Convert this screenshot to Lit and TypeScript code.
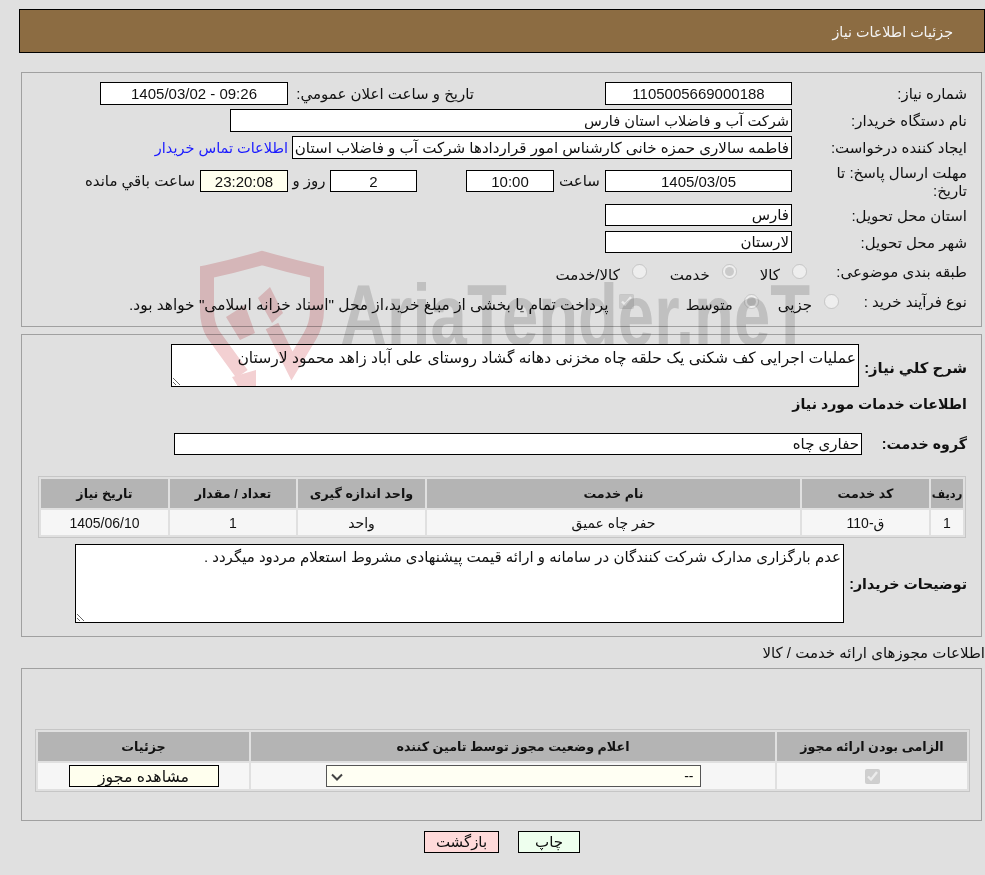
import { LitElement, html, css } from "lit";
import { customElement } from "lit/decorators.js";

const chevron =
  "url(\"data:image/svg+xml,%3Csvg xmlns='http://www.w3.org/2000/svg' width='12' height='8'%3E%3Cpath d='M1 1.5l5 5 5-5' fill='none' stroke='%23444' stroke-width='2'/%3E%3C/svg%3E\")";

@customElement("app-root")
export class AppRoot extends LitElement {
  static styles = css`
    :host {
      display: block;
      position: relative;
      width: 985px;
      height: 875px;
      overflow: hidden;
      background: #e0e0e0;
      color: #111;
      font: 15px "Liberation Sans", "DejaVu Sans", sans-serif;
      direction: rtl;
    }
    * { box-sizing: border-box; }
    .header {
      margin: 9px 0 0 19px;
      width: 966px;
      height: 44px;
      border: 1px solid #000;
      background: #8c6c42;
      color: #f4f4f4;
      font-size: 14.3px;
      display: flex;
      align-items: center;
      padding: 2px 31px 0 0;
    }
    .panel {
      margin-right: 3px;
      width: 961px;
      border: 1px solid #a0a0a0;
      padding-right: 14px;
    }
    .p1 { margin-top: 19px; height: 255px; padding-top: 9px; }
    .p2 { margin-top: 7px; height: 303px; padding-top: 9px; }
    .p3 { height: 153px; padding-top: 60px; }
    .row { display: flex; align-items: center; }
    .h23 { height: 23px; margin-bottom: 4px; }
    .h22 { height: 22px; margin-bottom: 5px; }
    .lab { flex: none; width: 175px; padding-top: 1px; }
    input.f {
      flex: none;
      height: 23px;
      border: 1px solid #000;
      border-radius: 0;
      background: #fff;
      color: #111;
      font: inherit;
      padding: 0 2px;
      outline: none;
      direction: rtl;
    }
    input.s { height: 22px; }
    input.fa { font-size: 14.6px; }
    input.long { font-size: 15.1px; }
    input.c { text-align: center; }
    .w187 { width: 187px; }
    .w88 { width: 88px; }
    .lab2 { flex: none; width: 186px; padding-top: 1px; }
    .sp1 { flex: none; width: 131px; }
    .link { color: #1a1aff; margin-right: 4px; white-space: nowrap; font-size: 14.5px; }
    .dead { margin-top: 7px; height: 30px; margin-bottom: 8px; }
    .dead .lab { padding-left: 30px; line-height: 18px; }
    .t51 { flex: none; width: 51px; text-align: center; }
    input.timer { background: #ffffee; }
    .m4 { margin-right: 5px; }
    .rad { height: 22px; }
    .r7 { margin-top: 11px; }
    .r8 { margin-top: 8px; }
    .r7 .lab-r { margin-bottom: 6px; }
    .r8 .lab-r2 { margin-bottom: 6px; }
    .lab-r { flex: none; width: 160px; }
    .lab-r2 { flex: none; width: 128px; }
    input.o {
      flex: none;
      width: 15px;
      height: 15px;
      margin: 0 0 8px 0;
    }
    .opt { margin: 0 12px 0 23px; white-space: nowrap; }
    .o2a { margin: 0 12px 0 19px; white-space: nowrap; }
    .o2b { margin: 0 11px 0 52px; white-space: nowrap; }
    .o2c { margin: 0 10px 0 0; white-space: nowrap; font-size: 15.4px; }
    textarea {
      flex: none;
      display: block;
      border: 1px solid #000;
      border-radius: 0;
      background: #fff;
      color: #111;
      font: inherit;
      padding: 3px 2px;
      margin: 0;
      outline: none;
      direction: rtl;
    }
    .ta1 { width: 688px; height: 43px; font-size: 15.55px; padding-top: 4px; }
    .ta2 { width: 769px; height: 79px; }
    .bold { font-weight: bold; font-size: 14.2px; white-space: nowrap; }
    .l108 { flex: none; width: 108px; padding-top: 3px; font-size: 14.8px; }
    .l105 { flex: none; width: 105px; }
    .l123 { flex: none; width: 123px; }
    .head2 { height: 20px; margin-top: 7px; display: flex; align-items: center; }
    .grp { margin-top: 19px; height: 22px; }
    .w688 { width: 688px; }
    table {
      border-collapse: separate;
      border-spacing: 2px;
      border: 1px solid #c6c6c6;
      table-layout: fixed;
    }
    th, td { padding: 0; text-align: center; font-size: 14px; }
    td { background: #f6f6f6; }
    th { background: #b4b4b4; font-weight: bold; font-size: 12.7px; height: 29px; }
    th.narrow { font-size: 11.5px; }
    .t1 { margin: 21px 1px 6px 0; width: 928px; }
    .t1 td { height: 25px; }
    .t2 { margin-right: -3px; width: 935px; }
    .t2 td { height: 26px; }
    .cap { height: 31px; display: flex; align-items: center; white-space: nowrap; padding-top: 1px; }
    select {
      display: block;
      margin: 0 auto;
      width: 375px;
      height: 22px;
      padding: 0 6px 0 20px;
      appearance: none;
      -webkit-appearance: none;
      background: #fffff3 ${css([chevron] as unknown as TemplateStringsArray)} no-repeat 4px 7px;
      border: 1px solid #555;
      border-radius: 0;
      font: 14px "Liberation Sans", sans-serif;
      color: #111;
      direction: rtl;
      outline: none;
    }
    .view {
      display: block;
      width: 150px;
      height: 22px;
      margin: 0 auto;
      border: 1px solid #000;
      background: #ffffee;
      color: #111;
      font: inherit;
      font-size: 15.8px;
      padding: 0;
    }
    td input[type="checkbox"] { width: 15px; height: 15px; margin: 0; vertical-align: middle; }
    .btns { display: flex; justify-content: center; margin-top: 10px; width: 985px; }
    .btns .inner { display: flex; gap: 19px; margin-left: 19px; }
    .btn {
      height: 22px;
      border: 1px solid #000;
      color: #111;
      font: inherit;
      padding: 0;
    }
    .print { width: 62px; background: #eeffee; }
    .back { width: 75px; background: #ffdada; }
    .wm {
      position: absolute;
      left: 0;
      top: 0;
      pointer-events: none;
      mix-blend-mode: multiply;
    }
    .wm text { direction: ltr; unicode-bidi: isolate; }
  `;

  render() {
    return html`
      <div class="header">جزئيات اطلاعات نياز</div>

      <div class="panel p1">
        <div class="row h23">
          <div class="lab">شماره نياز:</div>
          <input class="f c w187" readonly value="1105005669000188" />
          <div class="sp1"></div>
          <div class="lab2">تاريخ و ساعت اعلان عمومي:</div>
          <input class="f c" style="width:188px" readonly value="09:26 - 1405/03/02" />
        </div>
        <div class="row h23">
          <div class="lab">نام دستگاه خريدار:</div>
          <input class="f fa" style="width:562px" readonly value="شرکت آب و فاضلاب استان فارس" />
        </div>
        <div class="row h23">
          <div class="lab">ایجاد کننده درخواست:</div>
          <input class="f long" style="width:500px" readonly value="فاطمه سالاری حمزه خانی کارشناس امور قراردادها شرکت آب و فاضلاب استان فارس" />
          <a class="link">اطلاعات تماس خريدار</a>
        </div>
        <div class="row dead">
          <div class="lab">مهلت ارسال پاسخ: تا تاریخ:</div>
          <input class="f s c w187" readonly value="1405/03/05" />
          <div class="t51">ساعت</div>
          <input class="f s c w88" readonly value="10:00" />
          <div style="flex:none;width:49px"></div>
          <input class="f s c" style="width:87px" readonly value="2" />
          <div class="t51" style="width:42px">روز و</div>
          <input class="f s c w88 timer" readonly value="23:20:08" />
          <div class="m4">ساعت باقي مانده</div>
        </div>
        <div class="row h22">
          <div class="lab">استان محل تحویل:</div>
          <input class="f s w187" readonly value="فارس" />
        </div>
        <div class="row h22">
          <div class="lab">شهر محل تحویل:</div>
          <input class="f s w187" readonly value="لارستان" />
        </div>
        <div class="row rad r7">
          <div class="lab-r">طبقه بندی موضوعی:</div>
          <input class="o" type="radio" disabled />
          <span class="opt">كالا</span>
          <input class="o" type="radio" disabled checked />
          <span class="opt">خدمت</span>
          <input class="o" type="radio" disabled />
          <span class="opt">كالا/خدمت</span>
        </div>
        <div class="row rad r8">
          <div class="lab-r2">نوع فرآیند خرید :</div>
          <input class="o" type="radio" disabled />
          <span class="o2a">جزیی</span>
          <input class="o" type="radio" disabled checked />
          <span class="o2b">متوسط</span>
          <input class="o" type="checkbox" disabled checked />
          <span class="o2c">پرداخت تمام یا بخشی از مبلغ خرید،از محل "اسناد خزانه اسلامی" خواهد بود.</span>
        </div>
      </div>

      <div class="panel p2">
        <div class="row">
          <div class="l108 bold">شرح كلي نياز:</div>
          <textarea class="ta1" readonly>عملیات اجرایی کف شکنی یک حلقه چاه مخزنی دهانه گشاد روستای علی آباد زاهد محمود لارستان</textarea>
        </div>
        <div class="head2 bold">اطلاعات خدمات مورد نياز</div>
        <div class="row grp">
          <div class="l105 bold">گروه خدمت:</div>
          <input class="f s w688" readonly value="حفاری چاه" />
        </div>
        <table class="t1">
          <colgroup>
            <col style="width:32px" /><col style="width:127px" /><col style="width:373px" />
            <col style="width:127px" /><col style="width:126px" /><col style="width:127px" />
          </colgroup>
          <tr><th class="narrow">رديف</th><th>کد خدمت</th><th>نام خدمت</th><th>واحد اندازه گیری</th><th>تعداد / مقدار</th><th>تاریخ نیاز</th></tr>
          <tr><td>1</td><td>ق-110</td><td>حفر چاه عمیق</td><td>واحد</td><td>1</td><td>1405/06/10</td></tr>
        </table>
        <div class="row">
          <div class="l123 bold">توضیحات خریدار:</div>
          <textarea class="ta2" readonly>عدم بارگزاری مدارک شرکت کنندگان در سامانه و ارائه قیمت پیشنهادی مشروط استعلام مردود میگردد .</textarea>
        </div>
      </div>

      <div class="cap">اطلاعات مجوزهای ارائه خدمت / کالا</div>
      <div class="panel p3">
        <table class="t2">
          <colgroup><col style="width:190px" /><col style="width:524px" /><col style="width:211px" /></colgroup>
          <tr><th>الزامی بودن ارائه مجوز</th><th>اعلام وضعیت مجوز توسط تامین کننده</th><th>جزئیات</th></tr>
          <tr>
            <td><input type="checkbox" disabled checked /></td>
            <td><select><option>--</option></select></td>
            <td><button class="view">مشاهده مجوز</button></td>
          </tr>
        </table>
      </div>

      <div class="btns">
        <div class="inner">
          <button class="btn print">چاپ</button>
          <button class="btn back">بازگشت</button>
        </div>
      </div>

      <svg class="wm" width="985" height="875" viewBox="0 0 985 875">
        <defs>
          <clipPath id="letters"><rect x="300" y="250" width="560" height="94" /></clipPath>
          <clipPath id="logo"><rect x="180" y="240" width="170" height="146" /></clipPath>
        </defs>
        <g clip-path="url(#logo)" fill="none" stroke="#f3d0d2" stroke-width="14">
          <path d="M242 374 L213 334 Q207 324 207 310 V272 Q235 266 262 258 Q290 266 317 272 V310 Q317 324 310 336 L292 366 L272 326" />
        </g>
        <g clip-path="url(#logo)" fill="#f3d0d2">
          <path d="M226 317 L245 305 L255 333 L240 340 Z" />
          <path d="M258 298 L270 287 L283 313 L272 323 Z" />
          <path d="M232 377 L256 370 L256 390 L240 390 Z" />
        </g>
        <text
          clip-path="url(#letters)"
          x="340"
          y="345"
          fill="#dbdbdb"
          font-family="Liberation Sans"
          font-weight="bold"
          font-size="88"
          textLength="470"
          lengthAdjust="spacingAndGlyphs"
        >AriaTender.neT</text>
      </svg>
    `;
  }
}
